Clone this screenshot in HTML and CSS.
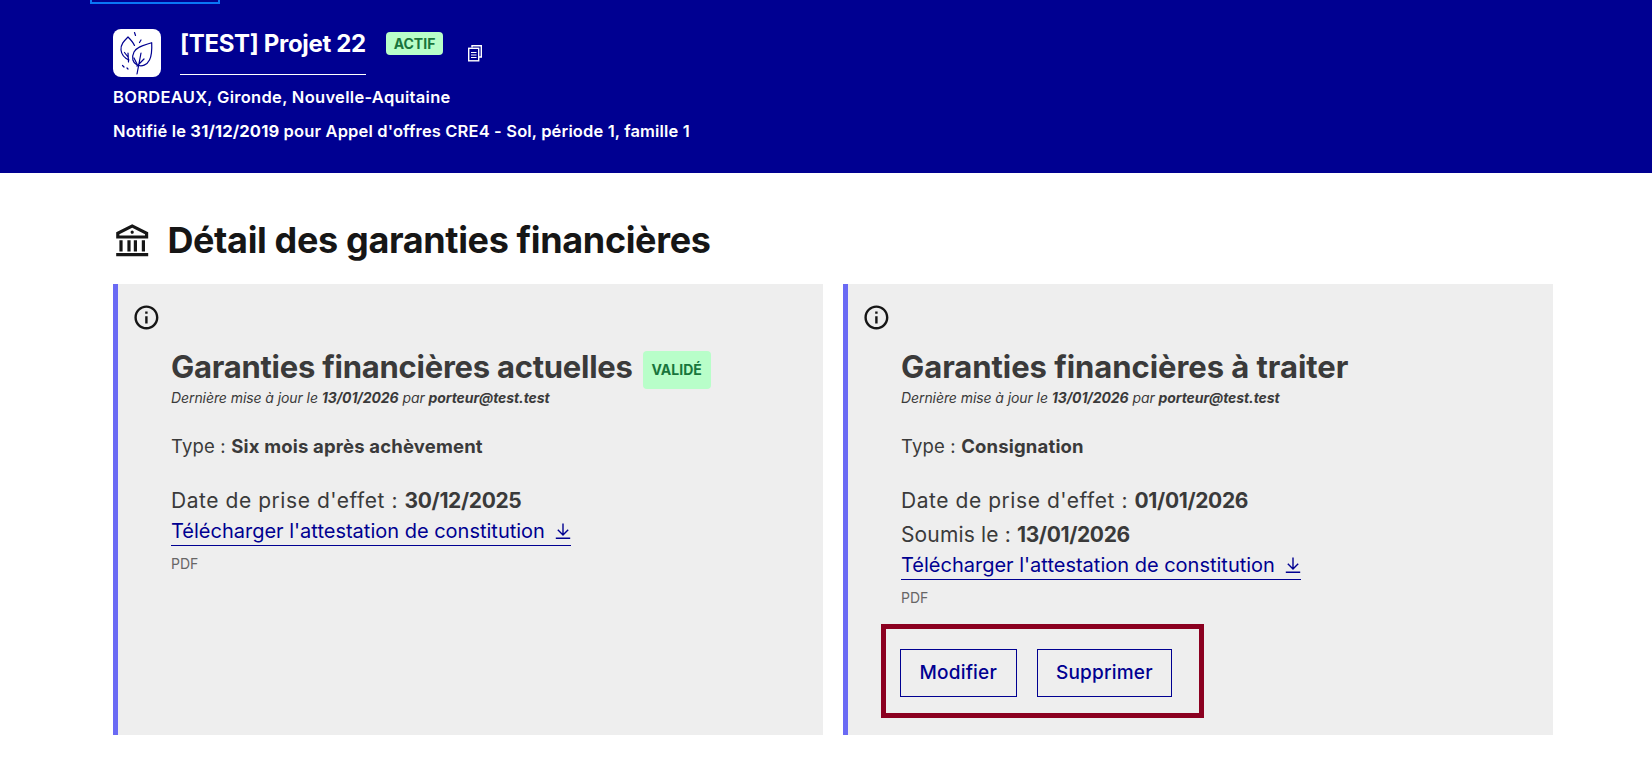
FILE: index.html
```html
<!DOCTYPE html>
<html lang="fr">
<head>
<meta charset="utf-8">
<title>Détail des garanties financières</title>
<link rel="stylesheet" href="styles.css">
</head>
<body>
<header class="banner">
  <div class="focus-ring"></div>
  <div class="banner-top">
    <div class="logo">
      <svg viewBox="0 0 48 48" width="48" height="48" fill="none" stroke="#000091" stroke-width="1.2" stroke-linecap="round" stroke-linejoin="round">
        <path d="M21.500 16.500C20 13 17.500 10.500 15 8 11 12 7.500 15.500 8 21c.5 5 3.500 8 8 10"/>
        <path d="M15 24l.5 9M11.500 23.500 15 28"/>
        <path d="M38.700 13.700C32 16 24.500 17 21 23c-3 6-1 11 3 13 5 2 10 0 12.500-5 2.500-5 2.500-11 2.200-17.300z"/>
        <path d="M28 24l-4 21M21 29l3 6M31 30l-7 7"/>
        <path d="M21.500 3.500l1 3M28 11l-1.500 2.500M9.500 36.500l1.500 1.500M14 39l1 1"/>
      </svg>
    </div>
    <div class="project">
      <div class="title-row">
        <h2 class="project-name">[TEST] Projet 22</h2>
        <span class="badge badge-actif">ACTIF</span>
        <svg class="copy" viewBox="0 0 16 18" width="16" height="18" fill="none" stroke="#fff" stroke-width="1.4">
          <path d="M5 3.500V1.700h9.300V13H12"/>
          <rect x="1.700" y="4.300" width="10" height="12.500"/>
          <path d="M4 8.500h5.500M4 11h5.500M4 13.500h5.500" stroke-width="1.200"/>
        </svg>
      </div>
    </div>
  </div>
  <p class="meta meta-place">BORDEAUX, Gironde, Nouvelle-Aquitaine</p>
  <p class="meta">Notifié le <strong>31/12/2019</strong> pour Appel d'offres CRE4 - Sol, période 1, famille 1</p>
</header>

<main class="content">
  <h1 class="page-title">
    <svg class="title-icon" viewBox="0 0 24 24" fill="#161616">
      <path d="M2 20H22V22H2V20ZM4 12H6V19H4V12ZM9 12H11V19H9V12ZM13 12H15V19H13V12ZM18 12H20V19H18V12ZM2 7L12 2L22 7V11H2V7ZM4 8.236V9H20V8.236L12 4.236L4 8.236ZM12 8C11.448 8 11 7.552 11 7C11 6.448 11.448 6 12 6C12.552 6 13 6.448 13 7C13 7.552 12.552 8 12 8Z"/>
    </svg>
    <span>Détail des garanties financières</span>
  </h1>
  <div class="cards">
    <section class="card">
      <svg class="info" viewBox="0 0 24 24" fill="#161616">
        <path d="M12 22C6.477 22 2 17.523 2 12C2 6.477 6.477 2 12 2C17.523 2 22 6.477 22 12C22 17.523 17.523 22 12 22ZM12 20C16.418 20 20 16.418 20 12C20 7.582 16.418 4 12 4C7.582 4 4 7.582 4 12C4 16.418 7.582 20 12 20ZM11 7H13V9H11V7ZM11 11H13V17H11V11Z"/>
      </svg>
      <div class="card-body">
        <div class="card-title-row">
          <h3 class="card-title card-title-tight">Garanties financières actuelles</h3>
          <span class="badge badge-valide">VALIDÉ</span>
        </div>
        <p class="updated">Dernière mise à jour le <strong>13/01/2026</strong> par <strong>porteur@test.test</strong></p>
        <p class="type">Type : <strong>Six mois après achèvement</strong></p>
        <p class="line">Date de prise d'effet : <strong>30/12/2025</strong></p>
        <a class="download" href="#">Télécharger l'attestation de constitution
          <svg viewBox="0 0 16 16" width="16" height="16" fill="none" stroke="#000091" stroke-width="1.400"><path d="M8 .5v11M2.800 6.800 8 12l5.200-5.200M.8 15.200h14.400"/></svg>
        </a>
        <p class="pdf">PDF</p>
      </div>
    </section>
    <section class="card">
      <svg class="info" viewBox="0 0 24 24" fill="#161616">
        <path d="M12 22C6.477 22 2 17.523 2 12C2 6.477 6.477 2 12 2C17.523 2 22 6.477 22 12C22 17.523 17.523 22 12 22ZM12 20C16.418 20 20 16.418 20 12C20 7.582 16.418 4 12 4C7.582 4 4 7.582 4 12C4 16.418 7.582 20 12 20ZM11 7H13V9H11V7ZM11 11H13V17H11V11Z"/>
      </svg>
      <div class="card-body">
        <div class="card-title-row">
          <h3 class="card-title">Garanties financières à traiter</h3>
        </div>
        <p class="updated">Dernière mise à jour le <strong>13/01/2026</strong> par <strong>porteur@test.test</strong></p>
        <p class="type">Type : <strong>Consignation</strong></p>
        <p class="line">Date de prise d'effet : <strong>01/01/2026</strong></p>
        <p class="line line-second">Soumis le : <strong>13/01/2026</strong></p>
        <a class="download" href="#">Télécharger l'attestation de constitution
          <svg viewBox="0 0 16 16" width="16" height="16" fill="none" stroke="#000091" stroke-width="1.400"><path d="M8 .5v11M2.800 6.800 8 12l5.200-5.200M.8 15.200h14.400"/></svg>
        </a>
        <p class="pdf">PDF</p>
        <div class="actions">
          <button class="btn" type="button">Modifier</button>
          <button class="btn" type="button">Supprimer</button>
        </div>
      </div>
    </section>
  </div>
</main>
</body>
</html>
```
FILE: styles.css
```css
* { box-sizing: border-box; }
html, body { margin: 0; padding: 0; }
body {
  background: #fff;
  color: #3a3a3a;
  font-family: Inter, "Open Sans", sans-serif;
  overflow: hidden;
}
p, h1, h2, h3 { margin: 0; }

.banner {
  position: relative;
  height: 173px;
  background: #000091;
  color: #fff;
  padding: 29px 0 0 113px;
}
.focus-ring {
  position: absolute;
  left: 90px;
  top: -4px;
  width: 130px;
  height: 8px;
  border: 2px solid #0a76f6;
}
.banner-top { display: flex; gap: 19px; }
.logo {
  width: 48px;
  height: 48px;
  background: #fff;
  border-radius: 8px;
}
.logo svg { display: block; }
.title-row { display: flex; align-items: flex-start; }
.project-name {
  font-size: 24px;
  line-height: 30px;
  font-weight: 700;
  letter-spacing: -0.33px;
  padding: 0 0 15px;
  border-bottom: 1px solid #fff;
  width: 186px;
  white-space: nowrap;
}
.badge {
  display: inline-block;
  background: #b8fec9;
  color: #18753c;
  font-weight: 700;
  border-radius: 4px;
  text-transform: uppercase;
}
.badge-actif {
  margin: 3px 0 0 20px;
  width: 57px;
  height: 23px;
  font-size: 14px;
  line-height: 23px;
  text-align: center;
}
.copy { margin: 15px 0 0 24px; }
.meta {
  font-size: 16.5px;
  line-height: 24px;
  font-weight: 600;
  letter-spacing: 0.15px;
  margin-top: 10px;
}
.meta-place { margin-top: 8px; letter-spacing: 0.3px; }
.meta strong { font-weight: 700; }

.content { padding: 0 99px 0 113px; }
.page-title {
  display: flex;
  align-items: center;
  gap: 16px;
  color: #161616;
  font-size: 36px;
  line-height: 44px;
  font-weight: 700;
  letter-spacing: -0.36px;
  margin-top: 45px;
}
.title-icon { width: 38.4px; height: 38.4px; flex: none; }
.cards {
  display: grid;
  grid-template-columns: 710px 710px;
  gap: 20px;
  margin-top: 22px;
}
.card {
  height: 451px;
  background: #eee;
  border-left: 5px solid #6a6af4;
  padding: 19px 0 0 14px;
  display: flex;
  flex-direction: column;
}
.info { display: block; width: 28.8px; height: 28.8px; flex: none; }
.card-body { padding: 17.2px 0 0 39px; }
.card-title-row { display: flex; align-items: center; gap: 10px; height: 38px; }
.card-title {
  font-size: 31px;
  line-height: 38px;
  font-weight: 700;
  letter-spacing: -0.05px;
  margin-top: -1px;
  color: #3a3a3a;
  white-space: nowrap;
}
.card-title-tight { letter-spacing: -0.25px; }
.badge-valide {
  width: 68px;
  height: 38px;
  margin-top: 4px;
  font-size: 14px;
  line-height: 38px;
  text-align: center;
}
.updated {
  font-size: 14px;
  line-height: 18px;
  font-style: italic;
  letter-spacing: -0.08px;
  margin-top: 2px;
}
.updated strong { font-weight: 700; }
.type {
  font-size: 18.5px;
  line-height: 26px;
  letter-spacing: 0.17px;
  margin-top: 26px;
}
.line {
  font-size: 21px;
  line-height: 30px;
  letter-spacing: 0.55px;
  margin-top: 27px;
}
.line strong { letter-spacing: -0.35px; }
.line-second { margin-top: 4px; letter-spacing: 0.15px; }
.download {
  display: inline-flex;
  align-items: center;
  gap: 10px;
  margin-top: 2px;
  color: #000091;
  text-decoration: none;
  font-size: 20px;
  line-height: 27px;
  border-bottom: 1px solid #000091;
  white-space: nowrap;
}
.pdf {
  font-size: 14px;
  line-height: 20px;
  color: #666;
  margin-top: 8px;
}
.actions {
  display: flex;
  gap: 20px;
  width: 323px;
  height: 94px;
  margin: 16px 0 0 -20px;
  padding: 20px 0 0 14px;
  border: 5px solid #8b0020;
}
.btn {
  height: 48px;
  padding: 0 18.5px;
  background: transparent;
  border: 1px solid #000091;
  color: #000091;
  font-family: inherit;
  font-size: 19px;
  font-weight: 500;
  letter-spacing: 0.2px;
}
```
